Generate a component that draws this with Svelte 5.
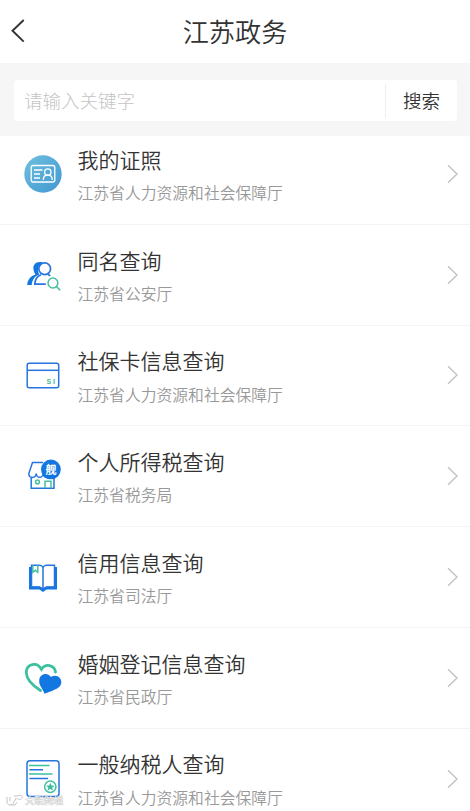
<script lang="ts">
    type Service = { icon : string, name : string, dept : string }

    let keyword = ''
    const services : Service[] = [
        { icon: 'card', name: '我的证照', dept: '江苏省人力资源和社会保障厅' },
        { icon: 'people', name: '同名查询', dept: '江苏省公安厅' },
        { icon: 'social', name: '社保卡信息查询', dept: '江苏省人力资源和社会保障厅' },
        { icon: 'tax', name: '个人所得税查询', dept: '江苏省税务局' },
        { icon: 'book', name: '信用信息查询', dept: '江苏省司法厅' },
        { icon: 'heart', name: '婚姻登记信息查询', dept: '江苏省民政厅' },
        { icon: 'paper', name: '一般纳税人查询', dept: '江苏省人力资源和社会保障厅' },
    ]
</script>

<div class="page">
    <header>
        <button class="back" aria-label="返回">
            <svg width="14" height="24" viewBox="0 0 14 24"><path d="M12.700 1 1.500 11.800l11.200 10.800" /></svg>
        </button>
        <h1>江苏政务</h1>
    </header>
    <div class="search">
        <div class="box">
            <input bind:value={keyword} placeholder="请输入关键字" />
            <button>搜索</button>
        </div>
    </div>
    <div class="scroll">
        <ul>
            {#each services as item}
            <li>
                <svg class="icon" width="40" height="40" viewBox="0 0 40 40">
                    {#if item.icon === 'card'}
                    <defs>
                        <linearGradient id="disc" x1="0" y1="0" x2="1" y2="1">
                            <stop offset="0" stop-color="#6fbfdd" />
                            <stop offset="1" stop-color="#4198d3" />
                        </linearGradient>
                    </defs>
                    <circle cx="20" cy="20" r="18.7" fill="url(#disc)" />
                    <g class="white">
                        <rect x="8.2" y="11.5" width="23.6" height="16.500" rx="2" />
                        <path d="M11 16h8.500M11 20h6M11 24h6" />
                        <circle cx="24.8" cy="18" r="3.200" />
                        <path d="M20.300 26c0-3 1.800-4.800 4.500-4.800s4.500 1.800 4.500 4.800" />
                    </g>
                    {:else if item.icon === 'people'}
                    <path class="solid" d="M20 7.300c-7-1.600-10.200 2.200-9.500 6.900.2 2.400 1.200 4 2 5.300C7.500 21 4.700 24.500 4.200 30h4.500c.6-5.500 3.200-8.800 7.600-10.500-2.300-4-1.700-9 3.700-12.200z" />
                    <g class="blue thick">
                        <circle cx="21.700" cy="13.700" r="5.900" />
                        <path d="M18 19.700c-4.300 1.600-6 5-6.200 9.500h11M25 19.500l2.300 1.300" />
                    </g>
                    <g class="green">
                        <circle cx="29.900" cy="28" r="4.900" />
                        <path d="m33.500 31.600 3.700 3.700" />
                    </g>
                    {:else if item.icon === 'social'}
                    <g class="blue">
                        <rect x="4.200" y="8.300" width="31.500" height="24.500" rx="2" />
                        <path d="M4.200 15.300h31.500" />
                    </g>
                    <text x="23.500" y="28.800" class="si">S I</text>
                    {:else if item.icon === 'tax'}
                    <g class="blue">
                        <path d="M20 6.500H9.500L5.800 17.500c.2 5.200 6.800 5.200 7.400 0 .8 5 6.200 5.200 7 0 .8 4.500 5 5 7 2.400M8.200 22v10.300h22.800V21" />
                    </g>
                    <g class="green">
                        <circle cx="14.500" cy="26" r="1.900" />
                        <path d="M22 32v-6.800h6V32" />
                    </g>
                    <circle cx="27.900" cy="13.400" r="9.900" class="solid" />
                    <text x="27.900" y="17.500" class="flag">舰</text>
                    {:else if item.icon === 'book'}
                    <path class="solid" d="M6 10h3v19.500h8l3 2 3-2h8V10h3v22.500H23.500L20 35l-3.500-2.500H6z" />
                    <path class="blue" d="M8.500 8.300h7.700c2 0 3.800 1.300 3.800 2.800 0-1.500 1.800-2.800 3.800-2.800h7.700v21.700h-7.700L20 32l-3.800-2H8.500zM20 10.500V32" />
                    <path class="green" d="M9.800 8.300v7l2.500-2 2.500 2v-7" />
                    {:else if item.icon === 'heart'}
                    <path class="leaf" d="M17.500 32.500C10.500 28 3.300 21.500 3.300 14.500c0-8.500 10.500-11.500 15.200-3.200 4-6.500 13-4.500 14 2.700" />
                    <path class="solid" d="M21.500 35.800c-1.400-5-5.600-7.800-5.300-13.300.4-7 8.300-8.700 11.800-3.500 4.700-3.300 11.400.3 10.200 6.500-1.100 5.600-10 7.300-16.700 10.300z" />
                    {:else}
                    <rect class="blue" x="4" y="1.700" width="32" height="35.700" rx="3" />
                    <g class="leaf thin">
                        <path d="M6.500 6.500H26M6.500 15H29" />
                        <circle cx="27.300" cy="27.800" r="5.700" />
                    </g>
                    <path class="blue" d="M6.500 10.700H20M6.500 19.500H25" />
                    <path fill="#3bbd9a" d="m27.300 23.800 1.200 2.700 3 .2-2.300 2 .8 2.900-2.700-1.600-2.700 1.600.8-2.900-2.300-2 3-.2z" />
                    {/if}
                </svg>
                <div class="text">
                    <h2>{item.name}</h2>
                    <p>{item.dept}</p>
                </div>
                <svg class="arrow" width="11" height="20" viewBox="0 0 11 20"><path d="m1 1.200 9 8.800-9 8.800" /></svg>
            </li>
            {/each}
        </ul>
    </div>
    <div class="mark">
        <svg width="18" height="13" viewBox="0 0 18 13">
            <path d="M1 3v5c0 4 6 4 7 0l2-4M4 3v4M8 2h3c3-2 7 0 5 2-1 2-4 2-5 0M5 11h4l2-3" />
        </svg>
        <span>大联跨境</span>
    </div>
</div>

<style>
    :global(body) {
        margin: 0;
        background: #fff;
    }
    .page {
        position: relative;
        display: flex;
        flex-direction: column;
        height: 100vh;
        overflow: hidden;
        font-family: "Noto Sans CJK SC", sans-serif;
        color: #333;
    }
    header {
        display: grid;
        grid-template-columns: 40px 1fr 40px;
        align-items: center;
        height: 63px;
        box-sizing: border-box;
        padding-bottom: 2px;
        flex: none;
    }
    button {
        border: none;
        background: none;
        padding: 0;
        font-family: inherit;
        color: #333;
    }
    .back {
        display: flex;
        padding-left: 11px;
    }
    .back path {
        fill: none;
        stroke: #333;
        stroke-width: 1.9;
    }
    h1 {
        margin: 0;
        text-align: center;
        font-size: 26.2px;
        font-weight: 350;
        line-height: 36px;
    }
    .search {
        flex: none;
        height: 73px;
        box-sizing: border-box;
        padding: 17px 13px 15px 14px;
        background: #f6f6f6;
    }
    .box {
        display: flex;
        align-items: center;
        height: 41px;
        background: #fff;
        border-radius: 4px;
    }
    input {
        flex: 1;
        min-width: 0;
        border: none;
        outline: none;
        background: none;
        padding: 0 0 2px 10px;
        font-family: inherit;
        font-size: 18.5px;
        font-weight: 300;
    }
    input::placeholder {
        color: #c4c4c4;
    }
    .box button {
        width: 72px;
        height: 34px;
        padding-bottom: 2px;
        border-left: 1px solid #eee;
        font-size: 18.5px;
        font-weight: 350;
    }
    .scroll {
        flex: 1;
        overflow: hidden;
    }
    ul {
        list-style: none;
        margin: -12px 0 0;
        padding: 0;
    }
    li {
        display: flex;
        align-items: center;
        height: 100.8px;
        box-sizing: border-box;
        padding: 0 12px 0 23px;
        border-bottom: 1px solid #f4f4f4;
    }
    .icon {
        flex: none;
        overflow: visible;
    }
    .text {
        flex: 1;
        margin-left: 14.5px;
    }
    h2 {
        margin: 0;
        font-size: 21px;
        font-weight: 350;
        line-height: 34px;
    }
    p {
        margin: 4.4px 0 0;
        font-size: 15.8px;
        font-weight: 350;
        line-height: 26px;
        color: #999;
    }
    .arrow path {
        fill: none;
        stroke: #c2c2c2;
        stroke-width: 1.4;
    }
    .white, .blue, .green, .leaf {
        fill: none;
        stroke-width: 1.5;
    }
    .white {
        stroke: #fff;
        stroke-width: 1.3;
    }
    .blue {
        stroke: #2675df;
    }
    .thick {
        stroke-width: 1.7;
    }
    .green {
        stroke: #45c0a0;
    }
    .leaf {
        stroke: #3bc0a0;
        stroke-width: 2.8;
        stroke-linecap: round;
    }
    .thin {
        stroke-width: 1.5;
    }
    .solid {
        fill: #1277e0;
    }
    .si {
        fill: #45b99a;
        font: bold 7px "Liberation Sans", sans-serif;
    }
    .flag {
        fill: #fff;
        font-size: 11px;
        font-weight: 700;
        text-anchor: middle;
    }
    .mark {
        position: absolute;
        left: 6px;
        bottom: 4px;
        display: flex;
        align-items: center;
        gap: 1px;
        font-size: 9.6px;
        line-height: 14px;
        color: #fff;
        text-shadow: 0 0 1px #888, 0 0 1px #aaa;
    }
    .mark path {
        fill: none;
        stroke: #c4c4c4;
    }
</style>
